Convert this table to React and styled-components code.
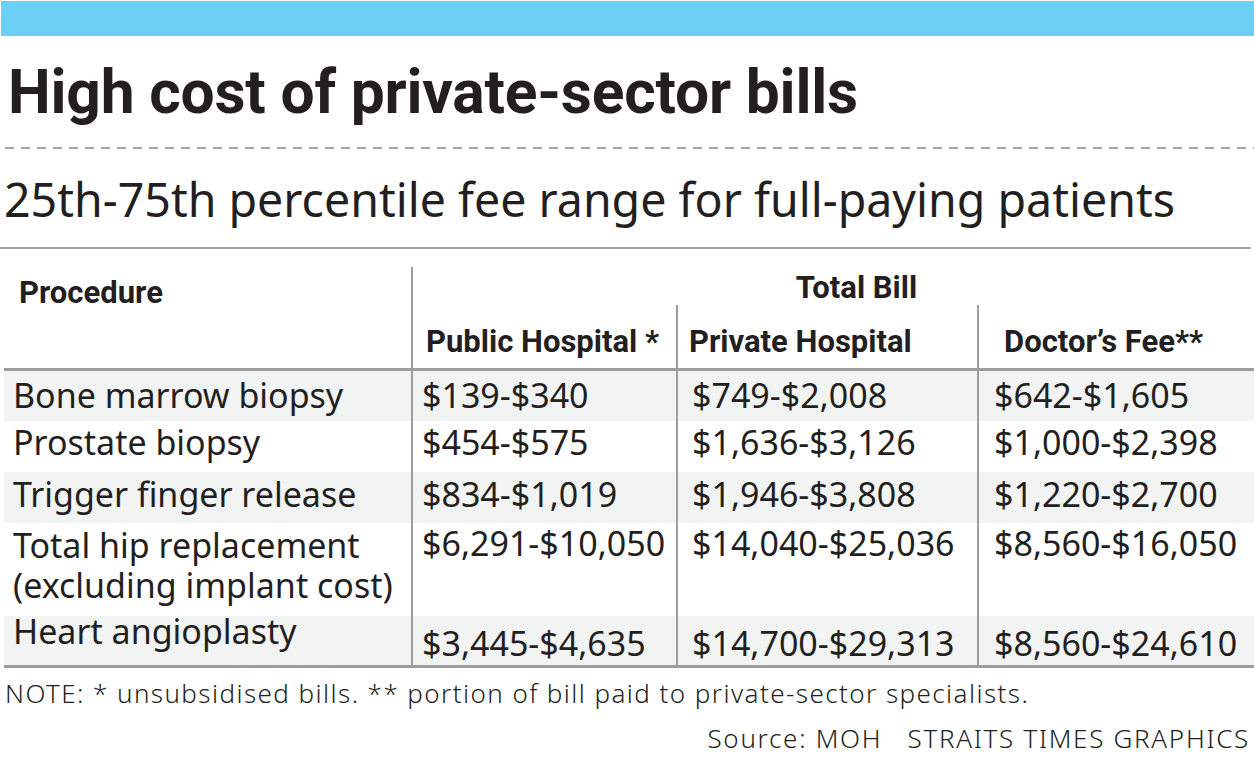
import React from "react";
import styled, { createGlobalStyle } from "styled-components";

const Global = createGlobalStyle`
  html, body { margin: 0; padding: 0; background: #ffffff; }
  body { font-family: "Noto Sans", "Open Sans", sans-serif; color: #231f20; }
`;

const COLS = "409px 265px 301px 275px";
const LINE = "#9d9d9d";

const Page = styled.div`
  width: 1254px;
  height: 758px;
  overflow: hidden;
  display: flex;
  flex-direction: column;
`;

const TopBar = styled.div`
  height: 35px;
  margin-top: 1px;
  margin-left: 1px;
  background: #6dcff6;
`;

const Title = styled.h1`
  margin: 26px 0 0 8px;
  font-family: Roboto, "Liberation Sans", sans-serif;
  font-weight: 700;
  font-size: 60.5px;
  line-height: 62px;
  letter-spacing: -0.2px;
  color: #231f20;
`;

const Dashed = styled.div`
  margin: 23px 0 0 5px;
  height: 2px;
  background: repeating-linear-gradient(90deg, #a7a7a7 0 9px, transparent 9px 16px);
`;

const Subtitle = styled.h2`
  margin: 22px 0 0 4px;
  font-family: "Noto Sans", sans-serif;
  font-weight: 400;
  font-size: 46.5px;
  line-height: 56px;
  color: #231f20;
`;

const Rule = styled.div`
  margin-top: 20px;
  height: 2px;
  width: 1251px;
  background: #a0a0a0;
`;

const Table = styled.div`
  margin: 18px 0 0 4px;
  width: 1250px;
  display: flex;
  flex-direction: column;
  border-bottom: 3px solid ${LINE};
`;

const HeadGrid = styled.div`
  display: grid;
  grid-template-columns: ${COLS};
  grid-template-rows: 38px 63px;
  border-bottom: 3px solid ${LINE};
`;

const HeadCell = styled.div`
  font-family: Roboto, "Liberation Sans", sans-serif;
  font-weight: 700;
  font-size: 31px;
  line-height: 30px;
  color: #231f20;
  white-space: nowrap;
  padding-left: ${(p) => p.$pl || 0}px;
  padding-top: ${(p) => p.$pt || 0}px;
  border-right: ${(p) => (p.$line ? `2px solid ${LINE}` : "none")};
`;

const ProcHead = styled(HeadCell)`
  grid-row: 1 / 3;
  grid-column: 1;
`;

const SpanHead = styled(HeadCell)`
  grid-row: 1;
  grid-column: 2 / 5;
  text-align: center;
`;

const Row = styled.div`
  display: grid;
  grid-template-columns: ${COLS};
  height: ${(p) => p.$h}px;
  background: ${(p) => (p.$shade ? "#f2f3f3" : "#ffffff")};
`;

const Cell = styled.div`
  font-family: "Noto Sans", "Open Sans", sans-serif;
  font-size: 34px;
  line-height: 40px;
  color: #231f20;
  white-space: pre;
  padding-left: ${(p) => p.$pl}px;
  padding-top: ${(p) => Math.max(p.$pt, 0)}px;
  margin-top: ${(p) => Math.min(p.$pt, 0)}px;
  border-right: ${(p) => (p.$line ? `2px solid ${LINE}` : "none")};
`;

const Note = styled.p`
  margin: 10px 0 0 5px;
  font-family: "Noto Sans", sans-serif;
  font-weight: 300;
  font-size: 26px;
  line-height: 30px;
  letter-spacing: 1.43px;
  white-space: nowrap;
  color: #231f20;
`;

const Source = styled.p`
  margin: 13px 4px 0 0;
  text-align: right;
  font-family: "Noto Sans", sans-serif;
  font-weight: 300;
  font-size: 26px;
  line-height: 35px;
  letter-spacing: 1.7px;
  color: #231f20;
  white-space: pre;
`;

const rows = [
  { name: "Bone marrow biopsy", vals: ["$139-$340", "$749-$2,008", "$642-$1,605"], h: 50, shade: true, np: 4, vp: 4 },
  { name: "Prostate biopsy", vals: ["$454-$575", "$1,636-$3,126", "$1,000-$2,398"], h: 51, shade: false, np: 1, vp: 1 },
  { name: "Trigger finger release", vals: ["$834-$1,019", "$1,946-$3,808", "$1,220-$2,700"], h: 51, shade: true, np: 2, vp: 2 },
  { name: "Total hip replacement\n(excluding implant cost)", vals: ["$6,291-$10,050", "$14,040-$25,036", "$8,560-$16,050"], h: 93, shade: false, np: 2, vp: 0 },
  { name: "Heart angioplasty", vals: ["$3,445-$4,635", "$14,700-$29,313", "$8,560-$24,610"], h: 49, shade: true, np: -5, vp: 7 },
];

const valPad = [9, 14, 15];

export default function App() {
  return (
    <Page>
      <Global />
      <TopBar />
      <Title>High cost of private-sector bills</Title>
      <Dashed />
      <Subtitle>25th-75th percentile fee range for full-paying patients</Subtitle>
      <Rule />
      <Table>
        <HeadGrid>
          <ProcHead $pl={15} $pt={11} $line>Procedure</ProcHead>
          <SpanHead $pl={46} $pt={6}>Total Bill</SpanHead>
          <HeadCell $pl={13} $pt={22} $line>Public Hospital *</HeadCell>
          <HeadCell $pl={11} $pt={22} $line>Private Hospital</HeadCell>
          <HeadCell $pl={25} $pt={22}>Doctor’s Fee**</HeadCell>
        </HeadGrid>
        {rows.map((r, i) => (
          <Row key={i} $h={r.h} $shade={r.shade}>
            <Cell $pl={9} $pt={r.np} $line>
              {r.name}
            </Cell>
            {r.vals.map((v, j) => (
              <Cell key={j} $pl={valPad[j]} $pt={r.vp} $line={j < 2}>
                {v}
              </Cell>
            ))}
          </Row>
        ))}
      </Table>
      <Note>NOTE: * unsubsidised bills. ** portion of bill paid to private-sector specialists.</Note>
      <Source>{"Source: MOH   STRAITS TIMES GRAPHICS"}</Source>
    </Page>
  );
}
